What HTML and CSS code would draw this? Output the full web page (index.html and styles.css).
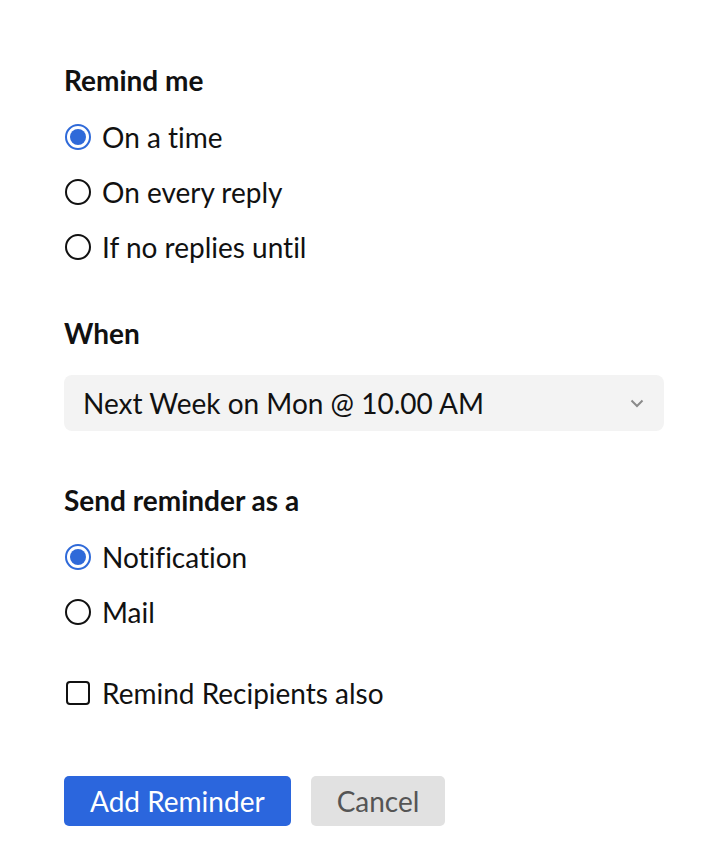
FILE: index.html
```html
<!DOCTYPE html>
<html>
<head>
<meta charset="utf-8">
<link rel="stylesheet" href="styles.css">
</head>
<body>
<div class="panel">
  <section class="group">
    <h2 class="heading">Remind me</h2>
    <div class="options">
      <label class="option"><span class="radio checked"></span><span>On a time</span></label>
      <label class="option"><span class="radio"></span><span>On every reply</span></label>
      <label class="option"><span class="radio"></span><span>If no replies until</span></label>
    </div>
  </section>
  <section class="group when">
    <h2 class="heading">When</h2>
    <div class="select">
      <span>Next Week on Mon @ 10.00 AM</span>
      <svg class="chev" width="14" height="9" viewBox="0 0 14 9"><path d="M1.5 1.5 L7 7 L12.5 1.5" fill="none" stroke="#8a8a8a" stroke-width="2"/></svg>
    </div>
  </section>
  <section class="group send">
    <h2 class="heading">Send reminder as a</h2>
    <div class="options">
      <label class="option"><span class="radio checked"></span><span>Notification</span></label>
      <label class="option"><span class="radio"></span><span>Mail</span></label>
    </div>
  </section>
  <label class="option check-row"><span class="checkbox"></span><span>Remind Recipients also</span></label>
  <div class="actions">
    <button class="btn primary">Add Reminder</button>
    <button class="btn secondary">Cancel</button>
  </div>
</div>
</body>
</html>
```
FILE: styles.css
```css
html, body {
  margin: 0;
  padding: 0;
  background: #fff;
}
body {
  font-family: Lato, "Noto Sans", sans-serif;
  color: #111;
  font-variant-ligatures: no-common-ligatures;
}
.panel {
  padding: 62px 42px 0 64px;
  display: flex;
  flex-direction: column;
}
.heading {
  margin: 0;
  font-size: 28px;
  font-weight: 700;
  line-height: 36px;
  color: #111;
}
.options {
  display: flex;
  flex-direction: column;
  gap: 19px;
  margin-top: 21px;
}
.option {
  display: flex;
  align-items: center;
  gap: 11px;
  font-size: 28px;
  line-height: 36px;
  height: 36px;
}
.radio {
  width: 26px;
  height: 26px;
  border: 2px solid #111;
  border-radius: 50%;
  box-sizing: border-box;
  margin-left: 1px;
  flex: none;
  display: flex;
  align-items: center;
  justify-content: center;
}
.radio.checked {
  border-color: #2f6ad9;
}
.radio.checked::after {
  content: "";
  width: 16px;
  height: 16px;
  border-radius: 50%;
  background: #2f6ad9;
}
.when {
  margin-top: 50px;
}
.select {
  margin-top: 24px;
  height: 56px;
  background: #f3f3f3;
  border-radius: 8px;
  display: flex;
  align-items: center;
  justify-content: space-between;
  padding: 0 20px 0 19px;
  font-size: 28px;
}
.chev {
  display: block;
}
.send {
  margin-top: 51px;
}
.check-row {
  margin-top: 45px;
}
.checkbox {
  width: 24px;
  height: 24px;
  border: 2px solid #111;
  border-radius: 4px;
  box-sizing: border-box;
  margin-left: 2px;
  margin-right: 1px;
  flex: none;
}
.actions {
  margin-top: 65px;
  display: flex;
  gap: 20px;
}
.btn {
  font-family: Lato, "Noto Sans", sans-serif;
  font-variant-ligatures: no-common-ligatures;
  font-size: 28px;
  height: 50px;
  border: none;
  border-radius: 5px;
  padding: 0 26px;
}
.primary {
  background: #2b66dd;
  color: #fff;
}
.secondary {
  background: #e1e1e1;
  color: #555;
}
```
